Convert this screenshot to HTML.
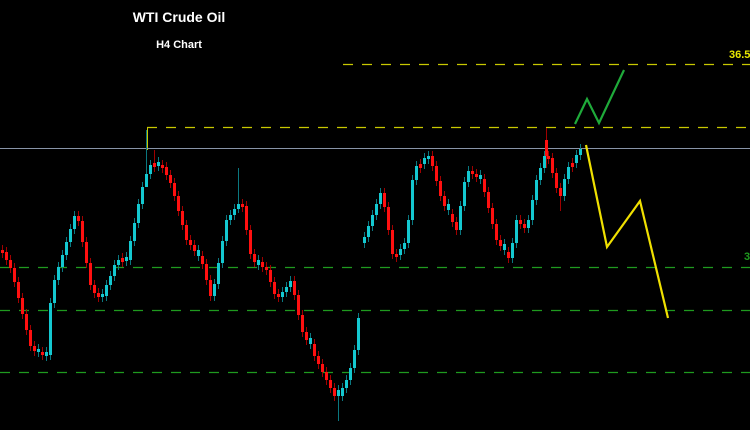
<!DOCTYPE html>
<html><head><meta charset="utf-8">
<style>
html,body{margin:0;padding:0;background:#000;width:750px;height:430px;overflow:hidden}
svg{display:block}
</style></head>
<body>
<svg width="750" height="430" xmlns="http://www.w3.org/2000/svg">
<rect width="750" height="430" fill="#000"/>
<text x="179" y="22" fill="#fff" font-size="14" font-weight="bold" font-family="Liberation Sans, sans-serif" text-anchor="middle">WTI Crude Oil</text>
<text x="179" y="48" fill="#fff" font-size="11" font-weight="bold" font-family="Liberation Sans, sans-serif" text-anchor="middle">H4 Chart</text>
<line x1="343" y1="64.5" x2="750" y2="64.5" stroke="#c8c800" stroke-width="1.2" stroke-dasharray="10,9"/>
<line x1="147" y1="127.5" x2="750" y2="127.5" stroke="#c8c800" stroke-width="1.2" stroke-dasharray="10,9"/>
<line x1="147.5" y1="127" x2="147.5" y2="150" stroke="#c8c800" stroke-width="1"/>
<line x1="0" y1="148.5" x2="750" y2="148.5" stroke="#8894a8" stroke-width="1"/>
<line x1="0" y1="267.5" x2="750" y2="267.5" stroke="#1f9a1f" stroke-width="1.3" stroke-dasharray="10,9"/>
<line x1="0" y1="310.5" x2="750" y2="310.5" stroke="#1f9a1f" stroke-width="1.3" stroke-dasharray="10,9"/>
<line x1="0" y1="372.5" x2="750" y2="372.5" stroke="#1f9a1f" stroke-width="1.3" stroke-dasharray="10,9"/>
<text x="729" y="58" fill="#e8e800" font-size="11" font-weight="bold" font-family="Liberation Sans, sans-serif">36.5</text>
<text x="744" y="260" fill="#1f9a1f" font-size="11" font-weight="bold" font-family="Liberation Sans, sans-serif">3</text>

<path stroke="#0a7880" stroke-width="1" fill="none" d="M38.5 344v13M46.5 347v14M50.5 298v62M54.5 275v33M58.5 262v23M62.5 250v22M66.5 237v23M70.5 224v23M74.5 211v23M102.5 289v13M106.5 280v21M110.5 271v19M114.5 260v21M118.5 255v15M126.5 252v14M130.5 236v29M134.5 218v28M138.5 199v29M142.5 182v27M146.5 130v57M150.5 160v19M158.5 157v14M198.5 245v16M214.5 279v22M218.5 258v31M222.5 236v32M226.5 215v31M230.5 210v15M234.5 204v16M238.5 168v45M258.5 255v15M282.5 287v15M286.5 282v15M290.5 276v16M310.5 333v16M338.5 385v36M342.5 383v18M346.5 375v18M350.5 363v22M354.5 345v28M358.5 313v42M364.5 232v16M368.5 221v21M372.5 210v21M376.5 199v21M380.5 188v21M400.5 244v16M404.5 238v16M408.5 215v33M412.5 175v50M416.5 161v24M424.5 153v16M428.5 151v13M448.5 199v16M460.5 201v34M464.5 177v34M468.5 166v21M480.5 170v14M504.5 239v16M512.5 238v25M516.5 215v33M528.5 215v18M532.5 195v30M536.5 175v30M540.5 163v22M544.5 151v22M564.5 174v27M568.5 162v22M576.5 150v18M580.5 144v16"/>
<path fill="#14c8d0" d="M37 349h3v3h-3zM45 352h3v4h-3zM49 303h3v52h-3zM53 280h3v23h-3zM57 267h3v13h-3zM61 255h3v12h-3zM65 242h3v13h-3zM69 229h3v13h-3zM73 216h3v13h-3zM101 294h3v3h-3zM105 285h3v11h-3zM109 276h3v9h-3zM113 265h3v11h-3zM117 260h3v5h-3zM125 257h3v4h-3zM129 241h3v19h-3zM133 223h3v18h-3zM137 204h3v19h-3zM141 187h3v17h-3zM145 174h3v13h-3zM149 165h3v9h-3zM157 162h3v4h-3zM197 250h3v6h-3zM213 284h3v12h-3zM217 263h3v21h-3zM221 241h3v22h-3zM225 220h3v21h-3zM229 215h3v5h-3zM233 209h3v6h-3zM237 204h3v5h-3zM257 260h3v5h-3zM281 292h3v5h-3zM285 287h3v5h-3zM289 281h3v6h-3zM309 338h3v6h-3zM337 390h3v6h-3zM341 388h3v8h-3zM345 380h3v8h-3zM349 368h3v12h-3zM353 350h3v18h-3zM357 318h3v32h-3zM363 237h3v6h-3zM367 226h3v11h-3zM371 215h3v11h-3zM375 204h3v11h-3zM379 193h3v11h-3zM399 249h3v6h-3zM403 243h3v6h-3zM407 220h3v23h-3zM411 180h3v40h-3zM415 166h3v14h-3zM423 158h3v6h-3zM427 156h3v3h-3zM447 204h3v6h-3zM459 206h3v24h-3zM463 182h3v24h-3zM467 171h3v11h-3zM479 175h3v4h-3zM503 244h3v6h-3zM511 243h3v15h-3zM515 220h3v23h-3zM527 220h3v8h-3zM531 200h3v20h-3zM535 180h3v20h-3zM539 168h3v12h-3zM543 156h3v12h-3zM563 179h3v17h-3zM567 167h3v12h-3zM575 155h3v8h-3zM579 149h3v6h-3z"/>

<path stroke="#a00000" stroke-width="1" fill="none" d="M2.5 245v13M6.5 247v18M10.5 255v18M14.5 263v24M18.5 277v26M22.5 293v26M26.5 309v26M30.5 325v26M34.5 341v15M42.5 347v13M78.5 211v15M82.5 216v31M86.5 237v31M90.5 258v32M94.5 280v18M98.5 288v14M122.5 253v14M154.5 150v22M162.5 160v13M166.5 162v18M170.5 170v18M174.5 178v23M178.5 191v25M182.5 206v24M186.5 220v25M190.5 235v15M194.5 240v16M202.5 251v18M206.5 259v26M210.5 275v26M242.5 199v13M246.5 201v34M250.5 225v34M254.5 249v18M262.5 257v15M266.5 262v13M270.5 265v22M274.5 277v22M278.5 289v13M294.5 276v24M298.5 290v30M302.5 310v27M306.5 327v18M314.5 339v22M318.5 351v18M322.5 359v18M326.5 367v18M330.5 375v18M334.5 383v18M384.5 188v24M388.5 202v33M392.5 225v34M396.5 249v13M420.5 159v14M432.5 151v20M436.5 161v25M440.5 176v25M444.5 191v20M452.5 209v18M456.5 217v18M472.5 166v13M476.5 169v13M484.5 174v23M488.5 187v26M492.5 203v26M496.5 219v26M500.5 235v16M508.5 247v16M520.5 215v14M524.5 219v14M546.5 128v40M548.5 151v13M552.5 153v25M556.5 168v25M560.5 183v28M572.5 158v14"/>
<path fill="#ff1010" d="M1 250h3v3h-3zM5 252h3v8h-3zM9 260h3v8h-3zM13 268h3v14h-3zM17 282h3v16h-3zM21 298h3v16h-3zM25 314h3v16h-3zM29 330h3v16h-3zM33 346h3v5h-3zM41 352h3v3h-3zM77 216h3v5h-3zM81 221h3v21h-3zM85 242h3v21h-3zM89 263h3v22h-3zM93 285h3v8h-3zM97 293h3v4h-3zM121 258h3v4h-3zM153 163h3v4h-3zM161 165h3v3h-3zM165 167h3v8h-3zM169 175h3v8h-3zM173 183h3v13h-3zM177 196h3v15h-3zM181 211h3v14h-3zM185 225h3v15h-3zM189 240h3v5h-3zM193 245h3v6h-3zM201 256h3v8h-3zM205 264h3v16h-3zM209 280h3v16h-3zM241 204h3v3h-3zM245 206h3v24h-3zM249 230h3v24h-3zM253 254h3v8h-3zM261 262h3v5h-3zM265 267h3v3h-3zM269 270h3v12h-3zM273 282h3v12h-3zM277 294h3v3h-3zM293 281h3v14h-3zM297 295h3v20h-3zM301 315h3v17h-3zM305 332h3v8h-3zM313 344h3v12h-3zM317 356h3v8h-3zM321 364h3v8h-3zM325 372h3v8h-3zM329 380h3v8h-3zM333 388h3v8h-3zM383 193h3v14h-3zM387 207h3v23h-3zM391 230h3v24h-3zM395 254h3v3h-3zM419 164h3v4h-3zM431 156h3v10h-3zM435 166h3v15h-3zM439 181h3v15h-3zM443 196h3v10h-3zM451 214h3v8h-3zM455 222h3v8h-3zM471 171h3v3h-3zM475 174h3v3h-3zM483 179h3v13h-3zM487 192h3v16h-3zM491 208h3v16h-3zM495 224h3v16h-3zM499 240h3v6h-3zM507 252h3v6h-3zM519 220h3v4h-3zM523 224h3v4h-3zM545 140h3v16h-3zM547 156h3v3h-3zM551 158h3v15h-3zM555 173h3v15h-3zM559 188h3v8h-3zM571 163h3v4h-3z"/>

<polyline points="575,124 587,99 599,123 624,70" fill="none" stroke="#1faa3a" stroke-width="2.2"/>
<polyline points="586,145 607,247 640,201 668,318" fill="none" stroke="#f0e000" stroke-width="2.2"/>
</svg>
</body></html>
